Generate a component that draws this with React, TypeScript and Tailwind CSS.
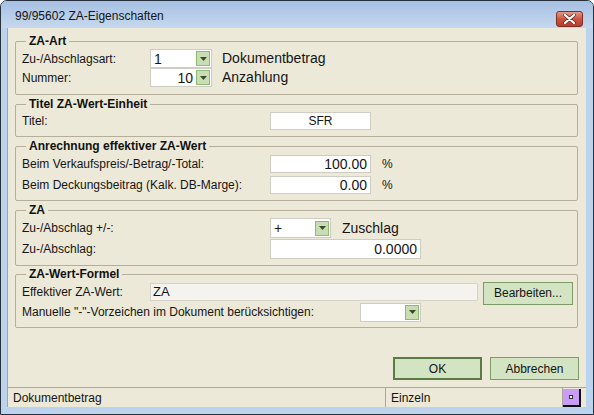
import React from "react";

// Dialog "ZA-Eigenschaften" im XP-Stil
function Arrow() {
  return (
    <svg width="7" height="4" viewBox="0 0 7 4">
      <path d="M0 0h7L3.5 4z" fill="#3b4a2e" />
    </svg>
  );
}

function Combo({ value, right, className }: { value: string; right?: boolean; className: string }) {
  return (
    <div className={`flex items-center h-[19px] bg-white border border-[#cdcdc4] ${className}`}>
      <span className={`flex-1 px-[3px] text-[14px] leading-none ${right ? "text-right" : ""}`}>{value}</span>
      <span className="w-[14px] h-[15px] mr-[1px] bg-[#c9ddb3] border border-[#8dba74] flex items-center justify-center">
        <Arrow />
      </span>
    </div>
  );
}

function Field({ value, className }: { value: string; className: string }) {
  return (
    <div className={`flex items-center h-[18px] bg-white border border-[#cdcdc4] px-[3px] leading-none ${className}`}>
      {value}
    </div>
  );
}

function Group({ title, className, children }: { title: string; className?: string; children: React.ReactNode }) {
  return (
    <fieldset className={`border border-[#b4ae9a] rounded-[2px] pl-[6px] pr-[3px] ${className ?? ""}`}>
      <legend className="ml-[4px] px-[3px] font-bold text-[12px] leading-[14px] text-[#111]">{title}</legend>
      {children}
    </fieldset>
  );
}

function Btn({ label, strong, className }: { label: string; strong?: boolean; className?: string }) {
  return (
    <div
      className={`flex items-center justify-center bg-[#d3e4c3] text-[12px] ${
        strong ? "border-2 border-[#5b7b45]" : "border border-[#7f9c68]"
      } ${className ?? ""}`}
    >
      {label}
    </div>
  );
}

export default function App() {
  return (
    <div className="w-[594px] h-[415px] font-['Liberation_Sans',Arial,sans-serif] text-[12px] text-[#151515]">
      <div className="w-full h-full flex flex-col border border-[#26313d] rounded-t-[7px] bg-[#bcd3ee] overflow-hidden">
        {/* Titelleiste */}
        <div className="h-[27px] shrink-0 flex items-center pl-[14px] pr-[10px] bg-gradient-to-b from-[#a6c0e2] to-[#c6d8ee]">
          <span className="flex-1 text-[12px] pt-[2px]">99/95602 ZA-Eigenschaften</span>
          <div className="w-[27px] h-[16px] mt-[8px] rounded-[3px] border border-[#7d2f26] bg-gradient-to-b from-[#e39a8c] via-[#c9543f] to-[#b8402c] flex items-center justify-center">
            <svg width="13" height="10" viewBox="0 0 13 10">
              <path d="M2 1l9 8M11 1l-9 8" stroke="#6a2a20" strokeWidth="3.6" strokeLinecap="round" />
              <path d="M2 1l9 8M11 1l-9 8" stroke="#fff" strokeWidth="2.2" strokeLinecap="round" />
            </svg>
          </div>
        </div>

        <div className="flex-1 flex flex-col pl-[6px] pr-[7px] pb-[7px]">
          <div className="flex-1 flex flex-col bg-[#ece9d8] border-l border-[#9aa8b8]">
            <div className="flex flex-col pl-[7px] pr-[8px] pt-[6px]">
              <Group title="ZA-Art" className="pb-[7px]">
                <div className="flex items-center h-[19px] mt-[1px]">
                  <span className="w-[128px]">Zu-/Abschlagsart:</span>
                  <Combo value="1" className="w-[62px]" />
                  <span className="ml-[10px] text-[14px]">Dokumentbetrag</span>
                </div>
                <div className="flex items-center h-[19px]">
                  <span className="w-[128px]">Nummer:</span>
                  <Combo value="10" right className="w-[62px]" />
                  <span className="ml-[10px] text-[14px]">Anzahlung</span>
                </div>
              </Group>

              <Group title="Titel ZA-Wert-Einheit" className="mt-[2px] pb-[6px]">
                <div className="flex items-center h-[19px]">
                  <span className="w-[248px]">Titel:</span>
                  <Field value="SFR" className="w-[101px] justify-center" />
                </div>
              </Group>

              <Group title="Anrechnung effektiver ZA-Wert" className="mt-[2px] pb-[6px]">
                <div className="flex flex-col gap-[2px] mt-[1px]">
                  <div className="flex items-center h-[19px]">
                    <span className="w-[248px]">Beim Verkaufspreis/-Betrag/-Total:</span>
                    <Field value="100.00" className="w-[101px] justify-end text-[14px]" />
                    <span className="ml-[11px]">%</span>
                  </div>
                  <div className="flex items-center h-[19px]">
                    <span className="w-[248px]">Beim Deckungsbeitrag (Kalk. DB-Marge):</span>
                    <Field value="0.00" className="w-[101px] justify-end text-[14px]" />
                    <span className="ml-[11px]">%</span>
                  </div>
                </div>
              </Group>

              <Group title="ZA" className="mt-[2px] pb-[6px]">
                <div className="flex flex-col gap-[1px] mt-[1px]">
                  <div className="flex items-center h-[20px]">
                    <span className="w-[248px]">Zu-/Abschlag +/-:</span>
                    <Combo value="+" className="w-[61px] h-[20px]" />
                    <span className="ml-[11px] text-[14px]">Zuschlag</span>
                  </div>
                  <div className="flex items-center h-[20px]">
                    <span className="w-[248px]">Zu-/Abschlag:</span>
                    <Field value="0.0000" className="w-[151px] h-[20px] justify-end text-[14px]" />
                  </div>
                </div>
              </Group>

              <Group title="ZA-Wert-Formel" className="mt-[1px] pb-[5px]">
                <div className="flex items-center h-[20px] mt-[1px]">
                  <span className="w-[128px]">Effektiver ZA-Wert:</span>
                  <div className="flex items-center w-[328px] h-[18px] bg-[#f4f3ee] border border-[#d6d4ca] px-[2px] text-[13px]">
                    ZA
                  </div>
                  <Btn label="Bearbeiten..." className="ml-[5px] w-[90px] h-[23px] mt-[2px]" />
                </div>
                <div className="flex items-center h-[20px]">
                  <span className="w-[338px]">Manuelle "-"-Vorzeichen im Dokument berücksichtigen:</span>
                  <Combo value="" className="w-[61px]" />
                </div>
              </Group>
            </div>

            <div className="flex-1" />

            <div className="flex justify-end gap-[8px] pr-[7px] pb-[7px]">
              <Btn label="OK" strong className="w-[89px] h-[23px]" />
              <Btn label="Abbrechen" className="w-[89px] h-[23px]" />
            </div>

            {/* Statusleiste */}
            <div className="h-[20px] flex border-t border-[#aca899] text-[12px]">
              <div className="w-[378px] flex items-center pl-[5px] border-r border-[#aca899]">Dokumentbetrag</div>
              <div className="flex-1 flex items-center pl-[5px] border-r border-[#aca899]">Einzeln</div>
              <div className="w-[19px] flex items-center">
                <div className="w-[18px] h-[18px] bg-[#c99cf6] border-r-2 border-b-2 border-[#111] flex items-center justify-center">
                  <div className="w-[4px] h-[4px] bg-white border border-[#333]" />
                </div>
              </div>
              <div className="w-[4px]" />
            </div>
          </div>
        </div>
      </div>
    </div>
  );
}
